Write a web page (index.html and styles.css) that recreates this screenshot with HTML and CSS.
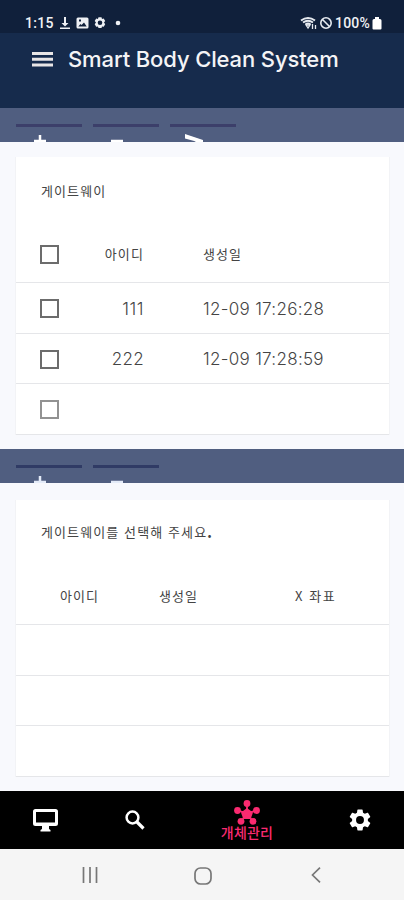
FILE: index.html
```
<!DOCTYPE html>
<html lang="ko">
<head>
<meta charset="utf-8">
<title>Smart Body Clean System</title>
<link rel="stylesheet" href="styles.css">
</head>
<body>
<div class="status">
  <span class="clock">1:15</span>
  <svg class="st-left" width="62" height="14" viewBox="0 0 62 14" fill="#eef0f4">
    <path d="M4 1h2v6h2.500L5 10.500 1.500 7H4zM0 11.500h10V13H0z"/>
    <path fill-rule="evenodd" d="M18 1.500h9q1.500 0 1.500 1.500v8q0 1.500-1.500 1.500h-9q-1.500 0-1.500-1.500V3q0-1.500 1.500-1.500zM18.300 10.500h8.400l-2.700-4-2.500 2.500-1-1zM19 3.500v2h2v-2z"/>
    <path fill-rule="evenodd" d="M38.500 1.200h3l.5 1.700 1.700-.4 1.500 2.500-1.200 1.500 1.200 1.800-1.500 2.400-1.700-.3-.5 1.700h-3l-.6-1.700-1.700.3-1.500-2.400L36 6.500l-1.300-1.500 1.500-2.500 1.700.4zM40 4.400a2.300 2.300 0 1 0 0 4.600 2.300 2.300 0 0 0 0-4.600z"/>
    <circle cx="58" cy="7" r="2.300"/>
  </svg>
  <svg class="st-right" width="34" height="14" viewBox="0 0 34 14" fill="none" stroke="#e6eaf0">
    <path d="M1 4.500Q8 -.5 15 4.500M3 6.500q5-3.500 10 0M5.500 8.500q2.500-2 5 0" stroke-width="1.900"/>
    <path d="M8 12l-2-3h4zM12.500 8v5M15.500 13V9" stroke-width="1.300"/>
    <circle cx="26" cy="7" r="5.200" stroke-width="1.600"/><path d="M22.500 3.500l7 7" stroke-width="1.600"/>
  </svg>
  <span class="charge">100%</span>
  <svg class="battery" width="10" height="13" viewBox="0 0 10 13" fill="#fff"><path d="M3 0h4v2h1q1.500 0 1.500 1.500V11.500q0 1-1 1h-7q-1 0-1-1v-8Q.5 2 2 2h1z"/></svg>
</div>
<header class="appbar">
  <svg width="21" height="15" viewBox="0 0 21 15" fill="#e9e6e6"><path d="M0 0h21v3H0zM0 5.800h21v3H0zM0 11.500h21v3H0z"/></svg>
  <h1>Smart Body Clean System</h1>
</header>
<div class="tools">
  <div class="tool"><svg width="12" height="13" viewBox="0 0 12 13"><path d="M6 0v12M0 6h12" stroke="#fff" stroke-width="2.500"/></svg></div>
  <div class="tool"><svg width="12" height="13" viewBox="0 0 12 13"><path d="M0 6h12" stroke="#fff" stroke-width="2.500"/></svg></div>
  <div class="tool next"><svg width="20" height="15" viewBox="0 0 20 15"><path d="M0 0l18 6v3L0 15v-4.500L11 7.500 0 4.500z" fill="#fff"/></svg></div>
</div>
<section class="panel first">
  <div class="card">
    <h2><span class="ko t1">게이트웨이</span></h2>
    <div class="row head"><i class="box"></i><span class="id ko">아이디</span><span class="date ko">생성일</span></div>
    <div class="row"><i class="box"></i><span class="id n111">111</span><span class="date">12-09 17:26:28</span></div>
    <div class="row"><i class="box"></i><span class="id">222</span><span class="date">12-09 17:28:59</span></div>
    <div class="row"><i class="box pale"></i></div>
  </div>
</section>
<div class="tools second">
  <div class="tool"><svg width="12" height="13" viewBox="0 0 12 13"><path d="M6 0v12M0 6h12" stroke="#e4ebf8" stroke-width="2.500"/></svg></div>
  <div class="tool"><svg width="12" height="13" viewBox="0 0 12 13"><path d="M0 6h12" stroke="#e4ebf8" stroke-width="2.500"/></svg></div>
</div>
<section class="panel last">
  <div class="card">
    <h2><span class="ko t2">게이트웨이를 선택해 주세요<b>.</b></span></h2>
    <div class="row cols"><span class="ko">아이디</span><span class="ko">생성일</span><span class="ko coord">X 좌표</span></div>
    <div class="row"></div>
    <div class="row"></div>
    <div class="row"></div>
  </div>
</section>
<nav class="tabs">
  <svg class="desk" width="25" height="23" viewBox="0 0 25 23" fill="#fff"><path fill-rule="evenodd" d="M2.500 0h20Q25 0 25 2.500v12q0 2.500-2.500 2.500H16v3l1.500 1v1.500h-10V21L9 20v-3H2.500Q0 17 0 14.500v-12Q0 0 2.500 0zM3 3v10.500h19V3z"/></svg>
  <svg class="find" width="20" height="20" viewBox="0 0 20 20" fill="none" stroke="#fff"><circle cx="7.500" cy="7.500" r="5.900" stroke-width="2.500"/><path d="M12 12l6.500 6.500" stroke-width="3.200"/></svg>
  <div class="active">
    <svg width="26" height="25" viewBox="0 0 26 25" fill="#fa2a70"><path d="M13 3v10M3.500 10.500L13 13M22.500 10.500L13 13M7 21.500l6-8M19 21.500l-6-8" stroke="#fa2a70" stroke-width="1.800"/><circle cx="13" cy="3.500" r="3.400"/><circle cx="3.500" cy="10.500" r="3.400"/><circle cx="22.500" cy="10.500" r="3.400"/><circle cx="7" cy="21.300" r="3.400"/><circle cx="19" cy="21.300" r="3.400"/><path d="M13 8l6 4.500-2.300 6.500H9.300L7 12.500z"/></svg>
    <span>개체관리</span>
  </div>
  <svg class="gear" width="22" height="22" viewBox="2 2 20 20" fill="#fff"><path d="M19.140 12.940c.04-.3.060-.61.060-.94 0-.32-.02-.64-.07-.94l2.030-1.580c.18-.14.230-.41.120-.61l-1.920-3.320c-.12-.22-.37-.29-.59-.22l-2.390.96c-.5-.38-1.030-.7-1.620-.94l-.36-2.540c-.04-.24-.24-.41-.48-.41h-3.840c-.24 0-.43.170-.47.410l-.36 2.540c-.59.240-1.130.57-1.620.94l-2.390-.96c-.22-.08-.47 0-.59.220L2.740 8.870c-.12.210-.08.470.12.610l2.030 1.580c-.05.300-.09.630-.09.940s.02.640.07.940l-2.030 1.580c-.18.140-.23.410-.12.610l1.920 3.320c.12.220.37.290.59.220l2.390-.96c.5.380 1.030.7 1.620.94l.36 2.540c.05.240.24.410.48.410h3.840c.24 0 .44-.17.470-.41l.36-2.540c.59-.24 1.130-.56 1.620-.94l2.390.96c.22.080.47 0 .59-.22l1.920-3.320c.12-.22.070-.47-.12-.61zM12 15.600a3.600 3.600 0 1 1 0-7.200 3.600 3.600 0 0 1 0 7.200z"/></svg>
</nav>
<footer class="system">
  <svg class="recent" width="16" height="16" viewBox="0 0 16 16"><path d="M1.500 0v16M8 0v16M14.500 0v16" stroke="#777" stroke-width="1.700"/></svg>
  <svg class="home" width="18" height="18" viewBox="0 0 18 18"><rect x="1" y="1" width="16" height="16" rx="5.500" fill="none" stroke="#777" stroke-width="1.700"/></svg>
  <svg class="back" width="10" height="16" viewBox="0 0 10 16"><path d="M9 .7L1.500 8 9 15.300" fill="none" stroke="#777" stroke-width="1.700"/></svg>
</footer>
</body>
</html>
```
FILE: styles.css
```
* { box-sizing: border-box; }
body { margin: 0; width: 404px; height: 900px; overflow: hidden; background: #f8f9fd; color: #444; font-family: Inter, "Noto Sans CJK KR", sans-serif; }
svg { display: block; flex: none; }
.status { height: 33px; display: flex; align-items: center; padding: 13px 22px 0 25px; background: #10203b; color: #f0f2f5; font: 500 14px/18px Roboto, sans-serif; }
.clock { width: 35px; letter-spacing: .3px; }
.st-right { margin-left: auto; }
.charge { margin-left: 1px; width: 37px; letter-spacing: .2px; white-space: nowrap; }
.battery { margin-left: 0; }
.appbar { height: 75px; display: flex; align-items: flex-start; padding: 19px 0 0 32px; background: #162b4c; }
.appbar h1 { margin: -6px 0 0 15px; font: 500 22px/26px Inter, sans-serif; letter-spacing: -.12px; color: #f4f4f6; white-space: nowrap; }
.tools { height: 34px; display: flex; gap: 11px; padding: 16px 16px 0; overflow: hidden; background: #505e80; }
.tool { width: 66px; height: 50px; flex: none; border-top: 3px solid #3c3f6a; padding: 8px 0 0 18px; }
.second .tool { border-top-color: #303b65; }
.tool.next { padding: 7px 0 0 15px; }
.panel { padding: 15px 15px 0; }
.first { height: 307px; }
.last { height: 308px; padding-top: 17px; }
.card { width: 375px; background: #fff; border: solid #f2f3f6; border-width: 0 1px; }
.card h2 { margin: 0; height: 69px; padding: 24px 0 0 25px; font: 400 13px/20px "Noto Sans CJK KR", sans-serif; }
.row { height: 50.6px; display: flex; align-items: center; border-bottom: 1px solid #e5e6e9; padding: 2px 0 0 24px; font-size: 17px; font-weight: 300; letter-spacing: .3px; }
.row.head { height: 57px; padding-top: 0; }
.row .ko, .ko { font: 400 13px/20px "Noto Sans CJK KR", sans-serif; letter-spacing: 1.1px; white-space: nowrap; }
.box { width: 19px; height: 19px; border: 2px solid #6c6c6c; flex: none; }
.box.pale { border-color: #929292; }
.id { width: 85px; text-align: right; }
.n111 { letter-spacing: .6px; }
.date { margin-left: 59px; white-space: nowrap; }
.last .card h2 { height: 69px; padding-top: 22px; }
.t2 b { font-weight: 900; }
.row.cols { height: 56px; display: grid; grid-template-columns: 99px 136px 1fr; padding: 0 0 2px 44px; }
.row .coord { letter-spacing: 1.6px; }
.tabs { height: 58px; display: flex; align-items: flex-start; background: #000; padding-left: 33px; }
.desk { margin-top: 18px; }
.find { margin: 19px 0 0 67px; }
.active { width: 56px; margin: 9px 0 0 74px; display: flex; flex-direction: column; align-items: center; color: #fa2a70; }
.active span { font: 500 14px/16px "Noto Sans CJK KR", sans-serif; margin-top: -1px; letter-spacing: .2px; white-space: nowrap; }
.gear { margin: 18px 0 0 74px; }
.system { height: 51px; display: flex; align-items: flex-start; background: #f5f5f5; padding: 18px 0 0 82px; }
.home { margin: 0 0 0 96px; }
.back { margin-left: 99px; }
```
